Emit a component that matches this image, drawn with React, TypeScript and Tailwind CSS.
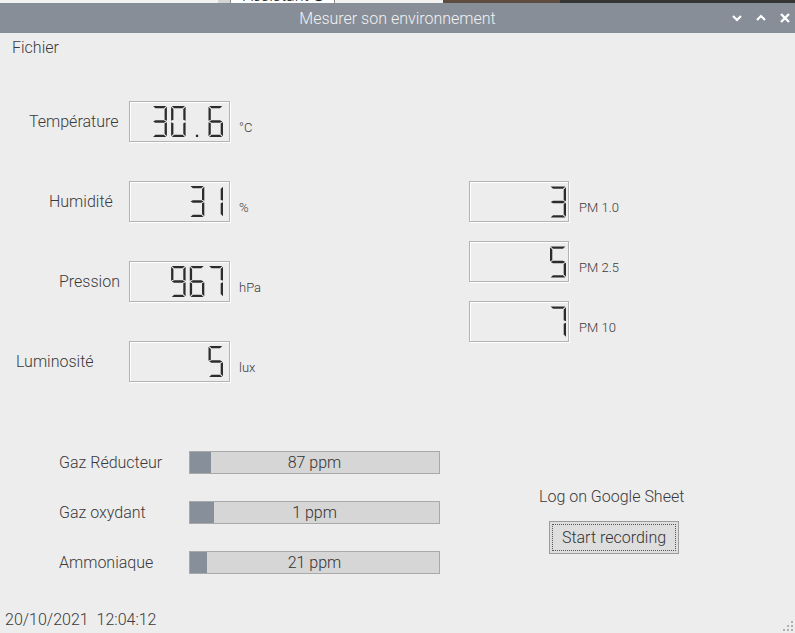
import React from "react";

type Pt = [number, number];

// 7-segment geometry, like a QLCDNumber in Filled style
function segments(W: number, H: number, t: number): Record<string, Pt[]> {
  const m = H / 2;
  const g = 0.7;
  const h = t / 2;
  return {
    a: [[g, 0], [W - g, 0], [W - g - t, t], [g + t, t]],
    f: [[0, g], [t, g + t], [t, m - g - h], [0, m - g]],
    b: [[W, g], [W, m - g], [W - t, m - g - h], [W - t, g + t]],
    g: [[g, m], [g + t, m - h], [W - g - t, m - h], [W - g, m], [W - g - t, m + h], [g + t, m + h]],
    e: [[0, m + g], [t, m + g + h], [t, H - g - t], [0, H - g]],
    c: [[W, m + g], [W, H - g], [W - t, H - g - t], [W - t, m + g + h]],
    d: [[g, H], [g + t, H - t], [W - g - t, H - t], [W - g, H]],
  };
}

const DIGITS: Record<string, string> = {
  "0": "abcdef",
  "1": "bc",
  "2": "abged",
  "3": "abgcd",
  "4": "fgbc",
  "5": "afgcd",
  "6": "afgecd",
  "7": "abc",
  "8": "abcdefg",
  "9": "abcdfg",
};

function LcdNumber({ value, w, h, last, pitch, top, dw }: { value: string; w: number; h: number; last: number; pitch: number; top: number; dw: number }) {
  const H = 31;
  const t = 2.3;
  const segs = segments(dw, H, t);
  const chars = value.split("").reverse();
  return (
    <div className="border border-[#b3b3b3] bg-[#ededed] shadow-[inset_1px_1px_0_#fff,1px_1px_0_#fff]" style={{ width: w, height: h }}>
      <svg role="img" aria-label={value} width={w - 2} height={h - 2} className="block">
        {chars.map((ch, i) => {
          const x = last - i * pitch;
          if (ch === ".") {
            return <rect key={i} x={x + dw / 2 - t / 2} y={top + H - t} width={t} height={t} fill="#2c2c2c" />;
          }
          return (
            <g key={i} transform={`translate(${x} ${top})`}>
              {(DIGITS[ch] || "").split("").map((s) => (
                <polygon key={s} points={segs[s].map((p) => p.join(",")).join(" ")} fill="#2c2c2c" />
              ))}
            </g>
          );
        })}
      </svg>
    </div>
  );
}

const SENSORS = [
  { label: "Température", pad: "pl-[29px]", value: "30.6", unit: "°C" },
  { label: "Humidité", pad: "pl-[49px]", value: "31", unit: "%" },
  { label: "Pression", pad: "pl-[59px]", value: "967", unit: "hPa" },
  { label: "Luminosité", pad: "pl-[16px]", value: "5", unit: "lux" },
];

const PARTICLES = [
  { value: "3", unit: "PM 1.0" },
  { value: "5", unit: "PM 2.5" },
  { value: "7", unit: "PM 10" },
];

const GASES = [
  { label: "Gaz Réducteur", value: "87 ppm", fill: 21 },
  { label: "Gaz oxydant", value: "1 ppm", fill: 24 },
  { label: "Ammoniaque", value: "21 ppm", fill: 17 },
];

export default function App() {
  return (
    <div className="w-[795px] h-[633px] overflow-hidden flex flex-col bg-[#ededed] text-[#3a3a3a] font-light font-[Roboto,'Liberation_Sans',sans-serif]">
      {/* desktop behind the window */}
      <div className="flex h-[3px] overflow-hidden">
        <div className="w-[218px] bg-[#f3f3f3]" />
        <div className="w-[12px] bg-[#d4d4d4]" />
        <div className="w-[105px] bg-white border-x border-[#8a8a8a] overflow-hidden">
          <div className="-mt-[12px] pl-[12px] text-[16px] leading-[16px] text-[#222] whitespace-nowrap">Assistant ⊗</div>
        </div>
        <div className="w-[108px] bg-[#f3f3f3]" />
        <div className="w-[117px] bg-[#5e4c40]" />
        <div className="flex-1 bg-[#353535]" />
      </div>

      {/* title bar */}
      <div className="h-[30px] grid grid-cols-[1fr_auto_1fr] items-center bg-[#878e98]">
        <div />
        <div className="pt-[2px] text-[16px] text-[#f2f2f2]">Mesurer son environnement</div>
        <div className="flex justify-end items-center gap-[12px] pr-[4px]">
          <svg width="12" height="12" viewBox="0 0 12 12">
            <path d="M2 4 L6 8 L10 4" fill="none" stroke="#fff" strokeWidth="2.2" />
          </svg>
          <svg width="12" height="12" viewBox="0 0 12 12">
            <path d="M2 8 L6 4 L10 8" fill="none" stroke="#fff" strokeWidth="2.2" />
          </svg>
          <svg width="12" height="12" viewBox="0 0 12 12">
            <path d="M2 2 L10 10 M10 2 L2 10" fill="none" stroke="#fff" strokeWidth="2.4" />
          </svg>
        </div>
      </div>

      {/* menu */}
      <div className="h-[28px] flex items-center pt-[2px] pl-[12px] text-[16px]">Fichier</div>

      <div className="flex-1 flex">
        {/* left column */}
        <div className="w-[469px] pt-[40px]">
          <div className="flex flex-col gap-[39px]">
            {SENSORS.map((s) => (
              <div key={s.label} className="flex items-center h-[41px]">
                <div className={`w-[129px] text-[16px] ${s.pad}`}>{s.label}</div>
                <LcdNumber value={s.value} w={101} h={41} last={78.5} pitch={18.7} top={4} dw={14.5} />
                <div className="self-start mt-[19px] ml-[9px] text-[13px] leading-4">{s.unit}</div>
              </div>
            ))}
          </div>

          <div className="mt-[69px] flex flex-col gap-[27px]">
            {GASES.map((g) => (
              <div key={g.label} className="flex items-center h-[23px]">
                <div className="w-[189px] pl-[59px] text-[16px]">{g.label}</div>
                <div className="relative w-[251px] h-[23px] border border-[#a9a9a9] bg-[#d6d6d6] flex">
                  <div className="bg-[#87909a] h-full" style={{ width: g.fill }} />
                  <div className="absolute inset-0 flex items-center justify-center text-[16px] text-[#333]">{g.value}</div>
                </div>
              </div>
            ))}
          </div>
        </div>

        {/* right column */}
        <div className="pt-[120px]">
          <div className="flex flex-col gap-[19px]">
            {PARTICLES.map((p) => (
              <div key={p.unit} className="flex items-center h-[41px]">
                <LcdNumber value={p.value} w={100} h={41} last={80} pitch={19} top={4.5} dw={16} />
                <div className="self-start mt-[19px] ml-[10px] text-[13px] leading-4">{p.unit}</div>
              </div>
            ))}
          </div>

          <div className="mt-[145px] ml-[70px] text-[16px] leading-[20px]">Log on Google Sheet</div>
          <button
            type="button"
            className="mt-[14px] ml-[80px] w-[130px] h-[33px] p-[2px] border border-[#9c9c9c] bg-[#dedede] text-[16px] text-[#333]"
          >
            <div className="h-full flex items-center justify-center border border-dotted border-[#555]">Start recording</div>
          </button>
        </div>
      </div>

      {/* status line */}
      <div className="h-[26px] flex items-center justify-between pl-[5px] pr-[2px]">
        <span className="text-[16px] whitespace-pre">20/10/2021  12:04:12</span>
        <svg width="10" height="10" viewBox="0 0 10 10" className="self-end mb-[2px]">
          <rect x="8" y="0" width="2" height="2" fill="#b0b0b0" />
          <rect x="4" y="4" width="2" height="2" fill="#b0b0b0" />
          <rect x="8" y="4" width="2" height="2" fill="#b0b0b0" />
          <rect x="0" y="8" width="2" height="2" fill="#b0b0b0" />
          <rect x="4" y="8" width="2" height="2" fill="#b0b0b0" />
          <rect x="8" y="8" width="2" height="2" fill="#b0b0b0" />
        </svg>
      </div>
    </div>
  );
}
